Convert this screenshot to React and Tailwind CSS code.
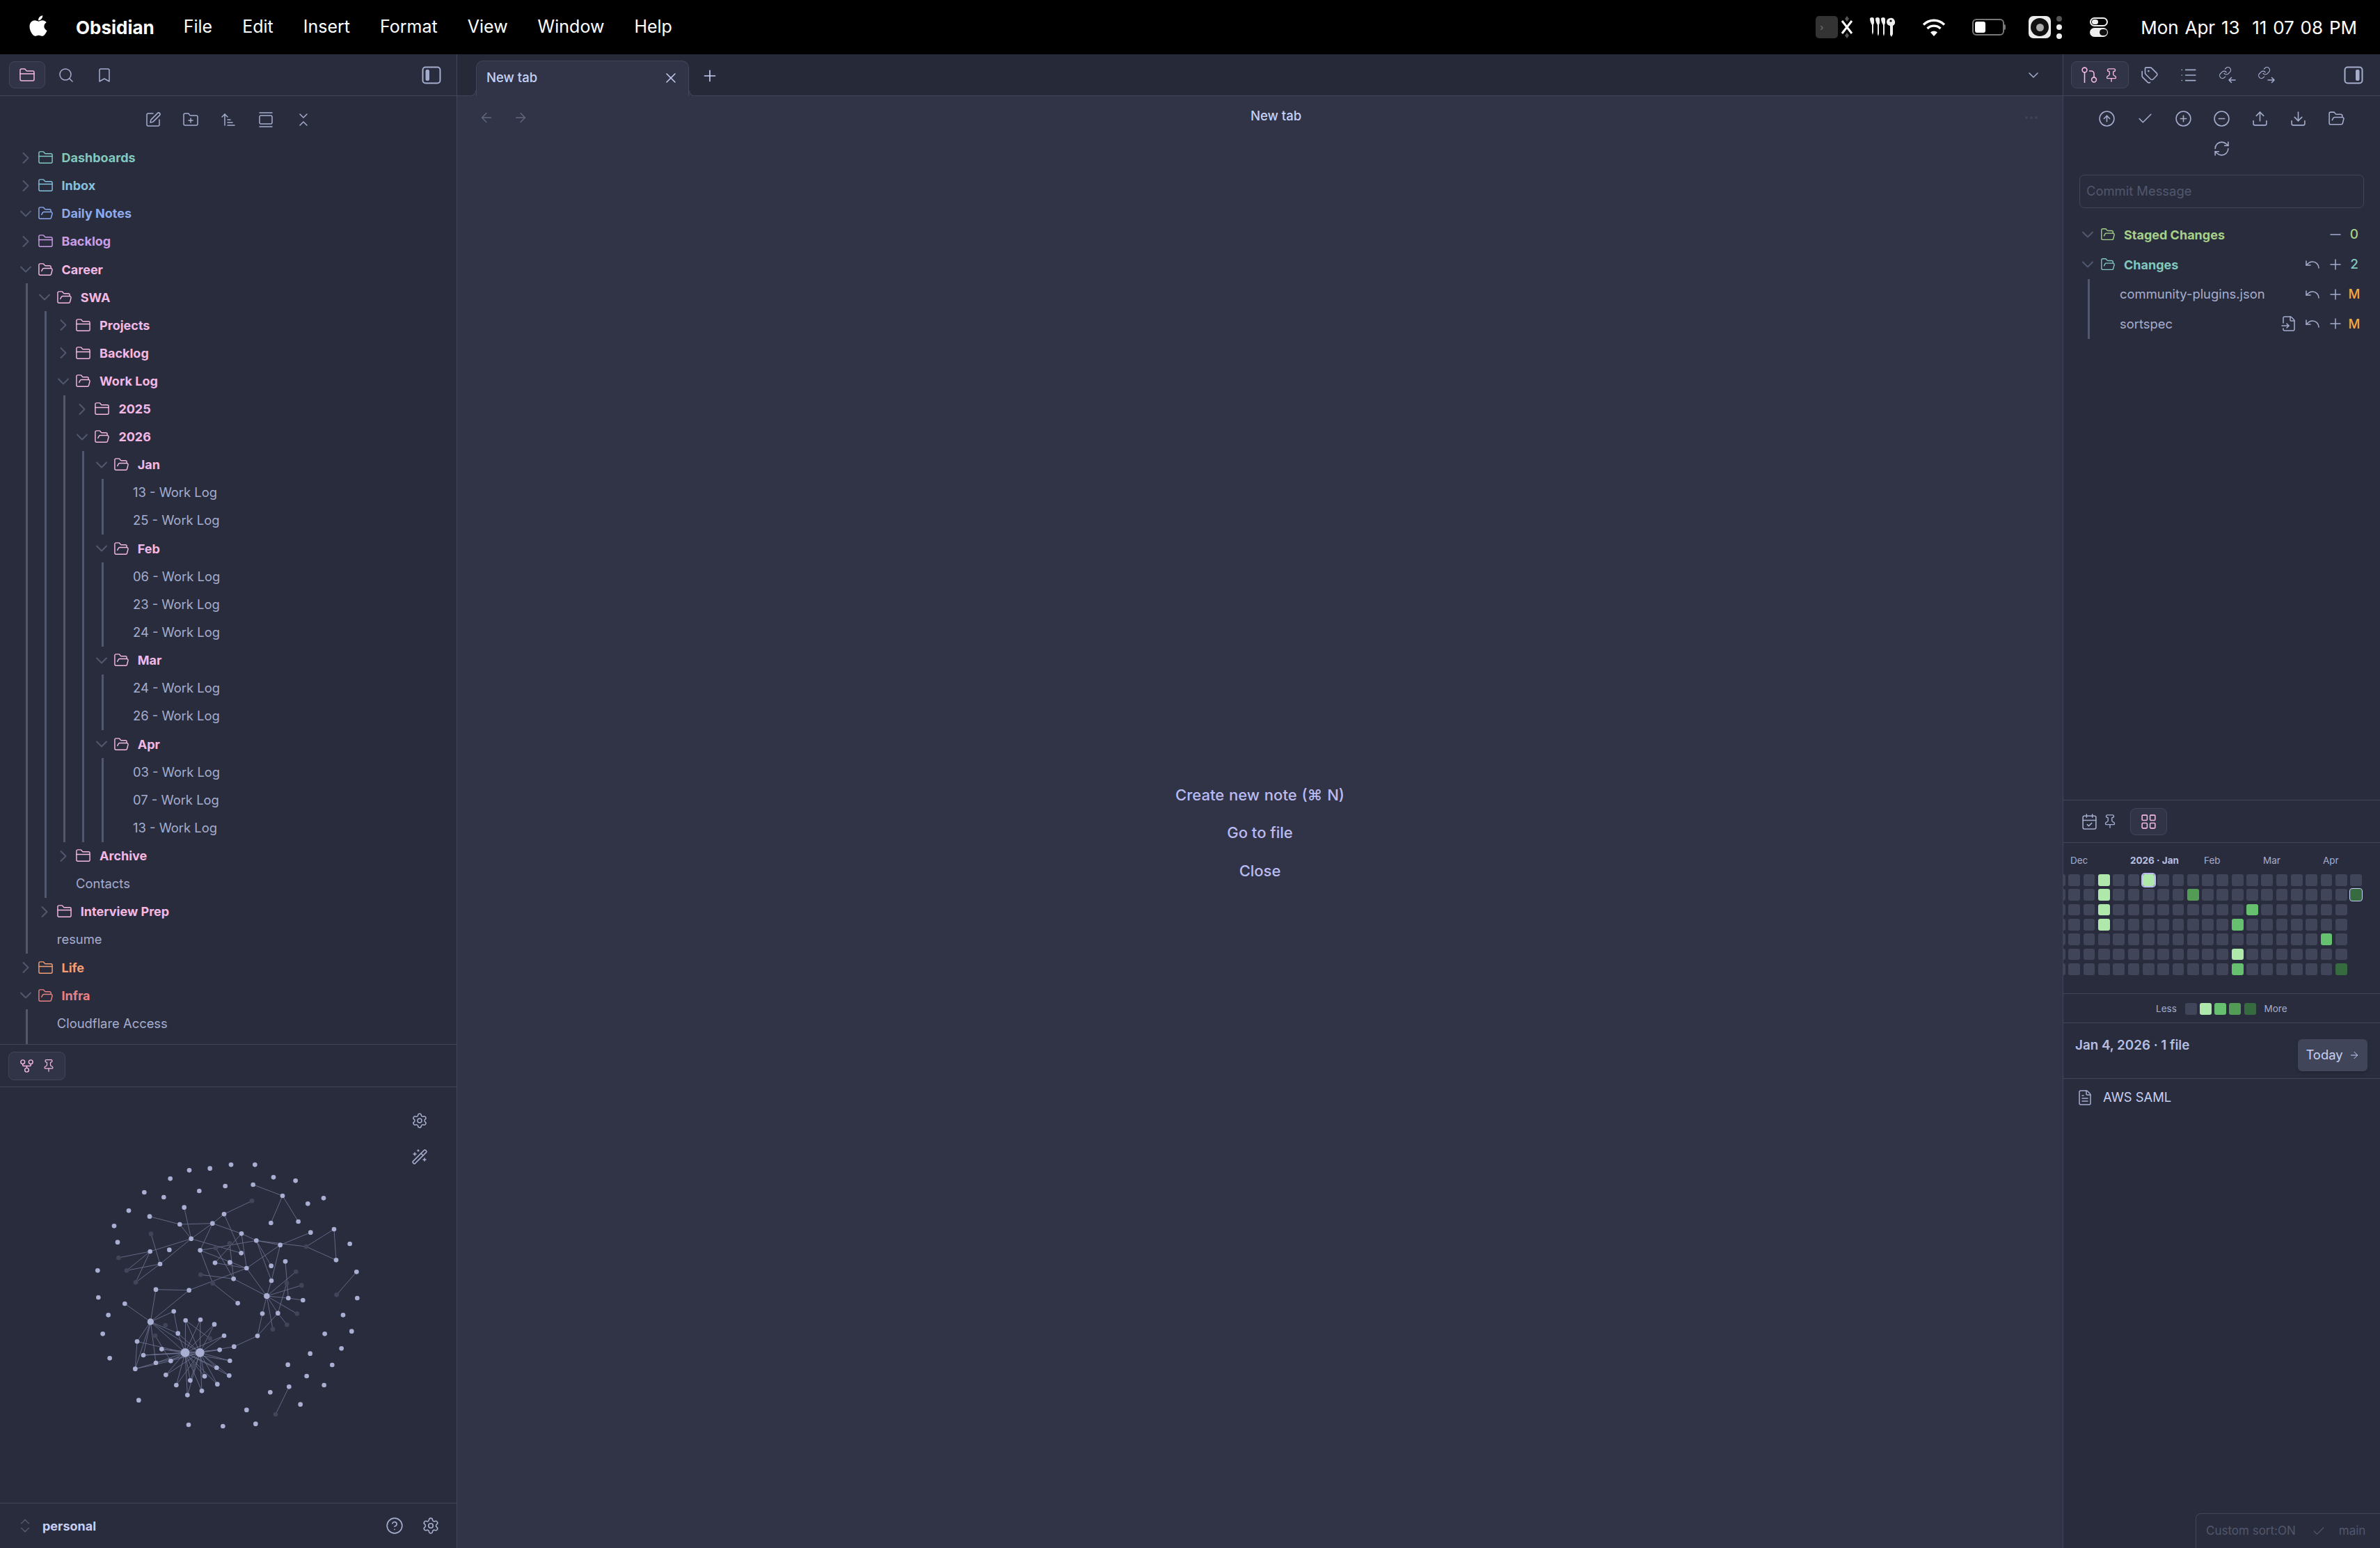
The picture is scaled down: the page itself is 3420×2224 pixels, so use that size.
import React from "react";
import { FaApple } from "react-icons/fa";
import {
  FolderClosed, FolderOpen, Search, Bookmark, SquarePen, FolderPlus, ArrowUpNarrowWide, GalleryVertical,
  ChevronsDownUp, ChevronRight, ChevronDown, X, Plus, Minus, ArrowLeft, ArrowRight, Pin, Tags, List,
  CircleArrowUp, Check, CirclePlus, CircleMinus, Upload, Download, RefreshCw, Undo, FileInput,
  CalendarCheck, LayoutGrid, FileText, GitFork, Settings, Wand2, CircleHelp, ChevronsUpDown,
} from "lucide-react";

const SW = 1.5;

function PanelIcon({ side }) {
  return (
    <svg width="28" height="26" viewBox="0 0 28 26" fill="none">
      <rect x="1.5" y="1.5" width="25" height="23" rx="4" stroke="#a5adce" strokeWidth="2" />
      <rect x={side === "left" ? 5.5 : 17} y="5" width="5.5" height="16" rx="2" fill="#a5adce" />
    </svg>
  );
}

function SourceControl() {
  return (
    <svg width="24" height="24" viewBox="0 0 24 24" fill="none" stroke="#f4b8e4" strokeWidth="1.6">
      <circle cx="4.5" cy="4.5" r="3.4" />
      <path d="M4.5 8V23" />
      <path d="M11 6h3a4 4 0 0 1 4 4v5" />
      <circle cx="18" cy="18.5" r="3.4" />
    </svg>
  );
}

function LinkArrow({ dir }) {
  return (
    <svg width="25" height="25" viewBox="0 0 25 25" fill="none" stroke="#a5adce" strokeWidth="1.5" strokeLinecap="round" strokeLinejoin="round">
      <g transform="translate(0 0) scale(0.8)">
        <path d="M10 13a5 5 0 0 0 7.54.54l3-3a5 5 0 0 0-7.07-7.07l-1.72 1.71" />
        <path d="M14 11a5 5 0 0 0-7.54-.54l-3 3a5 5 0 0 0 7.07 7.07l1.71-1.71" />
      </g>
      {dir === "in" ? <path d="M24 20h-9m3.5-3.5L15 20l3.5 3.5" /> : <path d="M15 20h9m-3.5-3.5L24 20l-3.5 3.5" />}
    </svg>
  );
}

function Tray() {
  return (
    <div className="flex items-center h-full">
      <div className="w-[32px] h-[32px] rounded-[5px] bg-[#333333] flex items-center pl-[6px] text-[#777] text-[13px] leading-none">›</div>
      <svg width="26" height="34" viewBox="0 0 26 34">
        <path d="M6 8l14 18M20 8L6 26" stroke="#fff" strokeWidth="3" />
        <path d="M13 1l3 4-3 4-3-4zM13 25l3 4-3 4-3-4z" fill="#555" />
      </svg>
      <svg width="38" height="30" viewBox="0 0 38 30" className="ml-[18px]" fill="#eee">
        <path d="M2 3c0-1 1-2 3-2s3 1 3 3v5c0 1-1 2-1 3v10l-1 4-1-3V12C4 10 2 7 2 3z" />
        <path d="M10 3c0-1 1-2 3-2s3 1 3 3v5c0 1-1 2-1 3v12l-1 4-1-3V12c-1-2-3-5-3-9z" />
        <path d="M18 3c0-1 1-2 3-2s3 1 3 3v5c0 1-1 2-1 3v12l-1 4-1-3V12c-1-2-3-5-3-9z" />
        <path d="M26 8a6 6 0 1 1 9 5v12l-2 4-2-3V13a6 6 0 0 1-5-5z" />
        <circle cx="32" cy="6" r="1.6" fill="#000" />
      </svg>
      <svg width="36" height="28" viewBox="0 0 36 28" className="ml-[38px]" fill="none" stroke="#fff" strokeWidth="3.4">
        <path d="M3 10.5a21 21 0 0 1 30 0" />
        <path d="M8.5 16a13.5 13.5 0 0 1 19 0" />
        <path d="M18 27l-5-5.5a7 7 0 0 1 10 0z" fill="#fff" stroke="none" />
      </svg>
      <div className="ml-[37px] flex items-center">
        <div className="w-[46px] h-[24px] rounded-[6px] border-2 border-[#777] p-[2px]">
          <div className="w-[15px] h-full rounded-[3px] bg-white" />
        </div>
        <div className="w-[2px] h-[8px] bg-[#777] rounded-r" />
      </div>
      <div className="ml-[33px] w-[32px] h-[32px] rounded-[7px] bg-[#ececec] flex items-center justify-center">
        <div className="w-[26px] h-[26px] rounded-full bg-[#111] flex items-center justify-center">
          <div className="w-[11px] h-[11px] rounded-full bg-[#aaa]" />
        </div>
      </div>
      <div className="ml-[8px] flex flex-col gap-[4.5px]">
        <div className="w-[8px] h-[8px] rounded-full bg-[#555]" />
        <div className="w-[8px] h-[8px] rounded-full bg-[#eee]" />
        <div className="w-[8px] h-[8px] rounded-full bg-[#eee]" />
      </div>
      <div className="ml-[40px] flex flex-col gap-[2px]">
        <div className="w-[26px] h-[13px] rounded-full border-2 border-[#eee] flex items-center pl-[1px]">
          <div className="w-[9px] h-[7px] rounded-full bg-[#eee]" />
          <div className="flex-1" />
        </div>
        <div className="w-[26px] h-[13px] rounded-full bg-[#eee] flex items-center justify-end pr-[1px]">
          <div className="w-[11px] h-[9px] rounded-full bg-[#111]" />
        </div>
      </div>
    </div>
  );
}

function MenuBar() {
  const items = ["File", "Edit", "Insert", "Format", "View", "Window", "Help"];
  return (
    <div className="h-[78px] bg-black text-white flex items-center shrink-0 pl-[38px] pr-[33px] text-[25px]">
      <FaApple className="text-[34px] -mt-[4px] text-white" />
      <span className="ml-[37px] font-bold text-[26px]">Obsidian</span>
      <div className="flex gap-[43px] ml-[42px]">
        {items.map((t) => <span key={t}>{t}</span>)}
      </div>
      <div className="ml-auto h-full flex items-center">
        <Tray />
        <span className="ml-[47px] text-[26px] whitespace-pre [word-spacing:1.5px]">Mon Apr 13  11 07 08 PM</span>
      </div>
    </div>
  );
}

const T = (name, color, children) => ({ name, color, children });
const F = (name) => ({ name, file: true });
const P = "#f4b8e4";
const logs = (a) => a.map((d) => F(`${d} - Work Log`));

const tree = [
  { name: "Dashboards", color: "#81c8be" },
  { name: "Inbox", color: "#85c1dc" },
  { name: "Daily Notes", color: "#8caaee", open: true },
  { name: "Backlog", color: "#ca9ee6" },
  T("Career", P, [
    T("SWA", P, [
      { name: "Projects", color: P },
      { name: "Backlog", color: P },
      T("Work Log", P, [
        { name: "2025", color: P },
        T("2026", P, [
          T("Jan", P, logs(["13", "25"])),
          T("Feb", P, logs(["06", "23", "24"])),
          T("Mar", P, logs(["24", "26"])),
          T("Apr", P, logs(["03", "07", "13"])),
        ]),
      ]),
      { name: "Archive", color: P },
      F("Contacts"),
    ]),
    { name: "Interview Prep", color: P },
    F("resume"),
  ]),
  { name: "Life", color: "#ef9f76" },
  T("Infra", "#e78284", [F("Cloudflare Access")]),
];

function Node({ n }) {
  if (n.file) {
    return (
      <div className="h-[40.13px] flex items-center pl-[28px] text-[#a5adce] text-[18.4px] whitespace-nowrap">{n.name}</div>
    );
  }
  const open = n.open || !!n.children;
  const Chev = open ? ChevronDown : ChevronRight;
  const Fold = open ? FolderOpen : FolderClosed;
  return (
    <div>
      <div className="h-[40.13px] flex items-center whitespace-nowrap font-bold text-[18px]" style={{ color: n.color }}>
        <Chev size={28} strokeWidth={1.7} className="text-[#51576d] shrink-0 -mx-[4px]" />
        <Fold size={23} strokeWidth={SW} className="ml-[7px] shrink-0" />
        <span className="ml-[12px]">{n.name}</span>
      </div>
      {n.children && (
        <div className="ml-[10px] border-l-[3px] border-[#51576d] pl-[14.3px]">
          {n.children.map((c, i) => <Node key={i} n={c} />)}
        </div>
      )}
    </div>
  );
}

const outer = [[576,184],[665,176],[756,160],[859,160],[939,214],[1034,229],[494,220],[382,279],[466,300],[619,273],[731,252],[851,246],[978,294],[1087,328],[1155,304],[315,358],[252,424],[267,494],[181,616],[184,732],[227,808],[203,889],[233,994],[358,1175],[573,1281],[721,1287],[862,1277],[823,1217],[925,1141],[1006,1117],[1055,1193],[1157,1110],[1082,1071],[1001,1022],[1097,974],[1192,1023],[1232,952],[1160,889],[1276,878],[1239,808],[1300,735],[1297,622],[1268,501],[1209,571],[1200,438],[1099,452],[554,344],[405,383],[535,417],[676,413],[726,373],[584,479],[801,457],[865,487],[968,506],[623,529],[800,541],[407,534],[490,527],[450,588],[687,583],[751,581],[823,606],[929,596],[990,577],[767,652],[930,660],[1003,735],[1066,744],[891,802],[958,800],[870,898],[432,698],[575,701],[785,757],[298,759],[509,792],[560,831],[624,828],[684,848],[726,897],[527,887],[351,922],[457,955],[378,981],[432,1014],[343,1040],[496,1006],[707,958],[769,944],[751,1005],[694,1035],[748,1069],[475,1066],[642,1072],[580,1090],[520,1110],[697,1106],[630,1135],[568,1153],[928,411],[1046,405]];
const dim = [[846,316],[411,458],[271,561],[306,616],[345,667],[625,634],[677,671],[690,519],[750,499],[1080,513],[1036,621],[1060,680],[996,671],[1040,802],[997,850],[936,869],[1211,721],[948,1236],[473,852],[429,897],[665,909],[595,1028]];
const big = [[910,726,13],[409,837,14],[558,970,19],[622,970,19]];
const edges = [[851,246,978,294],[978,294,928,411],[978,294,1046,405],[846,316,726,373],[726,373,676,413],[726,373,800,541],[554,344,584,479],[405,383,535,417],[535,417,676,413],[535,417,584,479],[676,413,584,479],[676,413,623,529],[676,413,801,457],[801,457,865,487],[865,487,968,506],[968,506,1099,452],[865,487,1080,513],[1080,513,1200,438],[1200,438,1209,571],[1209,571,1080,513],[584,479,800,541],[584,479,407,534],[584,479,450,588],[623,529,865,487],[623,529,823,606],[623,529,677,671],[677,671,785,757],[411,458,450,588],[271,561,407,534],[407,534,306,616],[407,534,345,667],[306,616,450,588],[345,667,450,588],[801,457,687,583],[801,457,823,606],[687,583,823,606],[690,519,767,652],[750,499,767,652],[625,634,767,652],[767,652,910,726],[823,606,910,726],[865,487,929,596],[865,487,930,660],[968,506,930,660],[930,660,910,726],[968,506,823,606],[823,606,575,701],[575,701,432,698],[575,701,409,837],[432,698,409,837],[298,759,409,837],[409,837,509,792],[509,792,527,887],[990,577,1003,735],[910,726,1036,621],[910,726,1060,680],[910,726,1003,735],[1003,735,1066,744],[910,726,1040,802],[910,726,891,802],[910,726,958,800],[910,726,936,869],[958,800,997,850],[958,800,996,671],[958,800,870,898],[891,802,870,898],[870,898,769,944],[769,944,622,970],[1297,622,1211,721],[1006,1117,948,1236],[409,837,351,922],[409,837,378,981],[409,837,432,1014],[409,837,343,1040],[409,837,558,970],[409,837,622,970],[409,837,527,887],[351,922,343,1040],[343,1040,432,1014],[343,1040,496,1006],[351,922,558,970],[378,981,558,970],[429,897,496,1006],[560,831,665,909]];
const leaves = [[560,831],[624,828],[684,848],[726,897],[527,887],[457,955],[378,981],[432,1014],[496,1006],[707,958],[751,1005],[694,1035],[748,1069],[475,1066],[642,1072],[580,1090],[520,1110],[697,1106],[630,1135],[568,1153]];

function Graph() {
  return (
    <svg width="500" height="460" viewBox="0 0 1500 1380" className="block">
      <g stroke="#6c7190" strokeWidth="2.6">
        {edges.map((e, i) => <line key={i} x1={e[0]} y1={e[1]} x2={e[2]} y2={e[3]} />)}
        {leaves.map((l, i) => (
          <g key={i}>
            <line x1={l[0]} y1={l[1]} x2={558} y2={970} />
            <line x1={l[0]} y1={l[1]} x2={622} y2={970} />
          </g>
        ))}
      </g>
      {dim.map((n, i) => <circle key={i} cx={n[0]} cy={n[1]} r="10" fill="#414559" />)}
      {outer.map((n, i) => <circle key={i} cx={n[0]} cy={n[1]} r="10" fill="#a9afd2" />)}
      {big.map((n, i) => <circle key={i} cx={n[0]} cy={n[1]} r={n[2]} fill="#a9afd2" />)}
    </svg>
  );
}

function ActiveBox({ children, className }) {
  return (
    <div className={"flex items-center justify-center h-[39px] rounded-[8px] bg-[#303446] border border-[#414559] " + className}>
      {children}
    </div>
  );
}

function LeftSidebar() {
  return (
    <div className="w-[657px] shrink-0 bg-[#292c3c] border-r border-[#414559] flex flex-col">
      <div className="h-[60px] shrink-0 border-b border-[#414559] flex items-center pl-[13px] pr-[22px] text-[#a5adce]">
        <ActiveBox className="w-[52px]"><FolderClosed size={24} strokeWidth={SW} color="#f4b8e4" /></ActiveBox>
        <Search size={24} strokeWidth={SW} className="ml-[18px]" />
        <Bookmark size={24} strokeWidth={SW} className="ml-[31px]" />
        <div className="ml-auto"><PanelIcon side="left" /></div>
      </div>
      <div className="h-[67px] shrink-0 flex items-center justify-center gap-[30px] text-[#a5adce]">
        <SquarePen size={24} strokeWidth={SW} />
        <FolderPlus size={24} strokeWidth={SW} />
        <ArrowUpNarrowWide size={24} strokeWidth={SW} />
        <GalleryVertical size={24} strokeWidth={SW} />
        <ChevronsDownUp size={24} strokeWidth={SW} />
      </div>
      <div className="h-[1296px] shrink-0 overflow-hidden pl-[26.5px] pt-[1.5px] border-b border-[#414559]">
        {tree.map((n, i) => <Node key={i} n={n} />)}
        <div className="ml-[10px] border-l-[3px] border-[#51576d] h-[40px]" />
      </div>
      <div className="h-[61px] shrink-0 flex items-center pl-[12px] border-b border-[#414559]">
        <ActiveBox className="w-[82px] h-[41px] gap-[10px]">
          <GitFork size={23} strokeWidth={SW} color="#f4b8e4" />
          <Pin size={20} strokeWidth={SW} color="#f4b8e4" />
        </ActiveBox>
      </div>
      <div className="relative flex-1 pl-[80px] pt-[58px]">
        <Graph />
        <div className="absolute right-[41px] top-[36px] flex flex-col gap-[28px] text-[#a5adce]">
          <Settings size={24} strokeWidth={SW} />
          <Wand2 size={24} strokeWidth={SW} />
        </div>
      </div>
      <div className="h-[65px] shrink-0 border-t border-[#414559] flex items-center pl-[26px] pr-[24px]">
        <ChevronsUpDown size={26} strokeWidth={1.5} className="text-[#51576d] -mx-[3px]" />
        <span className="ml-[15px] text-[18px] font-bold text-[#c6d0f5]">personal</span>
        <CircleHelp size={26} strokeWidth={SW} className="ml-auto text-[#a5adce]" />
        <Settings size={26} strokeWidth={SW} className="ml-[26px] text-[#a5adce]" />
      </div>
    </div>
  );
}

function Center() {
  return (
    <div className="flex-1 min-w-0 bg-[#303446] flex flex-col">
      <div className="h-[60px] shrink-0 bg-[#262937] border-b border-[#414559] flex items-end pl-[27px] pr-[30px] text-[#c6d0f5]">
        <div className="relative w-[306px] h-[51px] -mb-px bg-[#303446] border border-b-0 border-[#414559] rounded-t-[10px] flex items-center pl-[14px] pr-[13px] pb-[3px] text-[18.5px] font-medium">
          New tab
          <X size={24} strokeWidth={SW} className="ml-auto" />
          <div className="absolute -left-[9px] bottom-0 w-[8px] h-[8px] bg-[#303446]">
            <div className="w-full h-full bg-[#262937] rounded-br-[8px] border-r border-b border-[#414559]" />
          </div>
          <div className="absolute -right-[9px] bottom-0 w-[8px] h-[8px] bg-[#303446]">
            <div className="w-full h-full bg-[#262937] rounded-bl-[8px] border-l border-b border-[#414559]" />
          </div>
        </div>
        <Plus size={26} strokeWidth={SW} className="ml-[17px] mb-[15px] text-[#c6d0f5]" />
        <ChevronDown size={24} strokeWidth={SW} className="ml-auto mb-[17px] text-[#a5adce]" />
      </div>
      <div className="h-[62px] shrink-0 relative flex items-center pl-[31px] pr-[36px] text-[#626880]">
        <ArrowLeft size={22} strokeWidth={SW} />
        <ArrowRight size={22} strokeWidth={SW} className="ml-[27px]" />
        <span className="absolute left-[1140px] top-[15px] text-[18.5px] font-medium text-[#c6d0f5]">New tab</span>
        <div className="ml-auto flex gap-[3px]">
          <div className="w-[4px] h-[4px] rounded-full bg-[#3e4256]" />
          <div className="w-[4px] h-[4px] rounded-full bg-[#3e4256]" />
          <div className="w-[4px] h-[4px] rounded-full bg-[#3e4256]" />
        </div>
      </div>
      <div className="flex-1 flex flex-col items-center justify-center pb-[31px] text-[#babbf1] text-[22px] font-medium">
        <div className="h-[54.5px] flex items-center [word-spacing:1px]" style={{ fontFamily: "Inter, 'Noto Sans CJK SC', 'DejaVu Sans', sans-serif" }}>Create new note (⌘ N)</div>
        <div className="h-[54.5px] flex items-center">Go to file</div>
        <div className="h-[54.5px] flex items-center">Close</div>
      </div>
    </div>
  );
}

const L = { 0: "#414559", 1: "#aee8ab", 2: "#66c070", 3: "#529c56", 4: "#366b3f" };
const marks = { "3-0": 1, "3-1": 1, "3-2": 1, "3-3": 1, "6-0": 1, "9-1": 3, "13-2": 2, "12-3": 2, "18-4": 2, "12-5": 1, "12-6": 2, "19-6": 4, "20-1": 4 };

function Heatmap() {
  const cols = Array.from({ length: 21 }, (_, i) => i);
  return (
    <div className="flex gap-[4.53px] overflow-hidden h-[164px] items-start pt-[2px]">
      <div className="flex gap-[4.53px] -ml-[14px]">
        {cols.map((c) => (
          <div key={c} className="flex flex-col gap-[4.53px] w-[16.8px]">
            {Array.from({ length: c === 20 ? 2 : 7 }, (_, r) => {
              const sel = c === 6 && r === 0;
              const today = c === 20 && r === 1;
              return (
                <div
                  key={r}
                  className={"w-[16.8px] h-[16.8px] rounded-[3px] " + (sel ? "outline-2 outline-[#babbf1]" : "") + (today ? "outline-1 outline-[#c6d0f5]" : "")}
                  style={{ background: L[marks[`${c}-${r}`] || 0] }}
                />
              );
            })}
          </div>
        ))}
      </div>
    </div>
  );
}

function RightSidebar() {
  const Row = ({ name, actions, badge, badgeClass }) => (
    <div className="h-[42.7px] flex items-center text-[#a5adce] text-[18.4px]">
      <span className="pl-[43px]">{name}</span>
      <div className="ml-auto flex items-center text-[#a5adce]">{actions}</div>
      <span className={"w-[30px] text-center font-medium " + badgeClass}>{badge}</span>
    </div>
  );
  return (
    <div className="w-[456px] shrink-0 bg-[#292c3c] border-l border-[#414559] flex flex-col">
      <div className="h-[60px] shrink-0 border-b border-[#414559] flex items-center pl-[11px] pr-[24px] text-[#a5adce]">
        <ActiveBox className="w-[83px] gap-[8px]"><SourceControl /><Pin size={22} strokeWidth={SW} color="#f4b8e4" /></ActiveBox>
        <Tags size={26} strokeWidth={SW} className="ml-[17px]" />
        <List size={26} strokeWidth={SW} className="ml-[30px]" />
        <div className="ml-[30px]"><LinkArrow dir="in" /></div>
        <div className="ml-[31px]"><LinkArrow dir="out" /></div>
        <div className="ml-auto"><PanelIcon side="right" /></div>
      </div>
      <div className="h-[1012px] shrink-0 border-b border-[#414559] px-[23px] flex flex-col">
        <div className="flex flex-col items-center text-[#a5adce] pt-[19.5px]">
          <div className="flex gap-[30px]">
            <CircleArrowUp size={25} strokeWidth={SW} />
            <Check size={25} strokeWidth={SW} />
            <CirclePlus size={25} strokeWidth={SW} />
            <CircleMinus size={25} strokeWidth={SW} />
            <Upload size={25} strokeWidth={SW} />
            <Download size={25} strokeWidth={SW} />
            <FolderOpen size={25} strokeWidth={SW} />
          </div>
          <RefreshCw size={25} strokeWidth={SW} className="mt-[18px]" />
        </div>
        <div className="mt-[25.5px] h-[48px] rounded-[7px] border border-[#414559] flex items-center pl-[9px] text-[#51576d] text-[18.4px]">Commit Message</div>
        <div className="mt-[17px] -mr-[1px]">
          <div className="h-[42.7px] flex items-center text-[18px] font-bold text-[#a6d189] pl-[2px]">
            <ChevronDown size={28} strokeWidth={1.7} className="text-[#51576d] -mx-[4px]" />
            <FolderOpen size={22} strokeWidth={SW} className="ml-[8px]" />
            <span className="ml-[12px]">Staged Changes</span>
            <Minus size={24} strokeWidth={SW} className="ml-auto text-[#a5adce]" />
            <span className="w-[30px] text-center font-medium text-[19px]">0</span>
          </div>
          <div className="h-[42.7px] flex items-center text-[18px] font-bold text-[#81c8be] pl-[2px]">
            <ChevronDown size={28} strokeWidth={1.7} className="text-[#51576d] -mx-[4px]" />
            <FolderOpen size={22} strokeWidth={SW} className="ml-[8px]" />
            <span className="ml-[12px]">Changes</span>
            <Undo size={24} strokeWidth={SW} className="ml-auto text-[#a5adce]" />
            <Plus size={24} strokeWidth={SW} className="ml-[9px] text-[#a5adce]" />
            <span className="w-[30px] text-center font-medium text-[19px]">2</span>
          </div>
          <div className="ml-[12px] border-l-[3px] border-[#51576d]">
            <Row name="community-plugins.json" badge="M" badgeClass="text-[#f5a742]" actions={<><Undo size={24} strokeWidth={SW} /><Plus size={24} strokeWidth={SW} className="ml-[9px]" /></>} />
            <Row name="sortspec" badge="M" badgeClass="text-[#f5a742]" actions={<><FileInput size={24} strokeWidth={SW} /><Undo size={24} strokeWidth={SW} className="ml-[10px]" /><Plus size={24} strokeWidth={SW} className="ml-[9px]" /></>} />
          </div>
        </div>
      </div>
      <div className="h-[61px] shrink-0 border-b border-[#414559] flex items-center pl-[24px] text-[#a5adce]">
        <div className="w-[26px] flex justify-center"><CalendarCheck size={25} strokeWidth={SW} /></div>
        <Pin size={22} strokeWidth={SW} className="ml-[6px]" />
        <ActiveBox className="w-[53px] ml-[18px]"><LayoutGrid size={25} strokeWidth={SW} color="#f4b8e4" /></ActiveBox>
      </div>
      <div className="h-[217px] shrink-0 border-b border-[#414559] overflow-hidden">
        <div className="h-[43px] flex items-center text-[#a5adce] text-[13.5px] pt-[7px]">
          <span className="ml-[10px] w-[86px]">Dec</span>
          <span className="w-[106px] font-bold text-[#b5bfe2]">2026 · Jan</span>
          <span className="w-[85px]">Feb</span>
          <span className="w-[86px]">Mar</span>
          <span>Apr</span>
        </div>
        <Heatmap />
      </div>
      <div className="h-[42px] shrink-0 border-b border-[#414559] flex items-center pl-[133px] pt-[2px] text-[#a5adce] text-[13.5px]">
        <span>Less</span>
        <div className="flex gap-[4.2px] ml-[12px]">
          {[0, 1, 2, 3, 4].map((l) => <div key={l} className="w-[17px] h-[17px] rounded-[3px]" style={{ background: L[l] }} />)}
        </div>
        <span className="ml-[12px]">More</span>
      </div>
      <div className="h-[80px] shrink-0 border-b border-[#414559] flex items-start pl-[17px] pr-[18px]">
        <span className="mt-[18px] text-[18.8px] font-semibold text-[#b5bfe2]">Jan 4, 2026 · 1 file</span>
        <div className="ml-auto mt-[23px] w-[100px] h-[46px] rounded-[6px] bg-[#414559] shadow-md flex items-center justify-center gap-[8px] text-[#c6d0f5] text-[18.4px]">
          Today <ArrowRight size={16} strokeWidth={SW} />
        </div>
      </div>
      <div className="h-[54px] shrink-0 flex items-center pl-[19px] text-[#c6d0f5] text-[18.4px]">
        <FileText size={24} strokeWidth={SW} className="text-[#a5adce]" />
        <span className="ml-[14px]">AWS SAML</span>
      </div>
    </div>
  );
}

export default function App() {
  return (
    <div className="w-[3420px] h-[2224px] relative overflow-hidden flex flex-col bg-[#292c3c]" style={{ fontFamily: "Inter, 'Liberation Sans', sans-serif" }}>
      <MenuBar />
      <div className="flex-1 min-h-0 flex">
        <LeftSidebar />
        <Center />
        <RightSidebar />
      </div>
      <div className="absolute right-0 bottom-0 w-[265px] h-[50px] border-l border-t border-[#414559] rounded-tl-[8px] bg-[#292c3c] flex items-center pl-[14px] text-[#51576d] text-[17px]">
        Custom sort:ON
        <Check size={20} strokeWidth={SW} className="ml-[23px]" />
        <span className="ml-[19px]">main</span>
      </div>
    </div>
  );
}
